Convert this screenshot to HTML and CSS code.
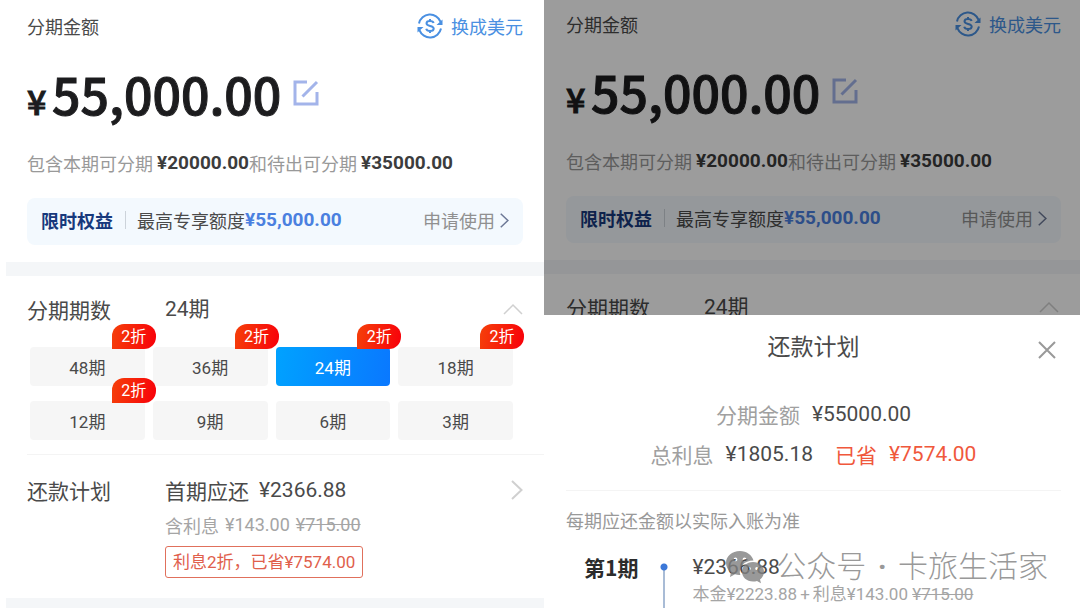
FILE: index.html
```html
<!DOCTYPE html>
<html lang="zh-CN">
  <head>
    <meta charset="UTF-8" />
    <meta name="viewport" content="width=device-width, initial-scale=1.0" />
    <title>账单分期</title>
    <link rel="stylesheet" href="styles.css">
  </head>
  <body>
    <svg class="symbols" xmlns="http://www.w3.org/2000/svg">
      <symbol id="icon-swap" viewBox="0 0 26 26">
        <path d="M2 10.500A11.300 11.300 0 0 1 23.600 8.800M24 15.500A11.300 11.300 0 0 1 2.400 17.200" fill="none" stroke="currentColor" stroke-width="2" />
        <path d="M25.500 6.500v5.500h-6zM.5 19.500V14h6z" fill="currentColor" />
        <path d="M16.600 10C16.200 8.600 15 7.900 13 7.900c-2.200 0-3.500.9-3.500 2.400 0 3.500 7.200 1.800 7.200 5.200 0 1.600-1.400 2.500-3.700 2.500-2.100 0-3.400-.8-3.800-2.300M13 6v2M13 18v2" fill="none" stroke="currentColor" stroke-width="2" />
      </symbol>
      <symbol id="icon-edit" viewBox="0 0 26 26">
        <path d="M14 2H2v22h22V12M9.500 16.500L24 2" fill="none" stroke="currentColor" stroke-width="3" />
      </symbol>
      <symbol id="icon-right" viewBox="0 0 12 20">
        <path d="M1 1l9.500 9L1 19" fill="none" stroke="currentColor" stroke-width="2" />
      </symbol>
      <symbol id="icon-up" viewBox="0 0 20 12">
        <path d="M1 11l9-9 9 9" fill="none" stroke="currentColor" stroke-width="1.500" />
      </symbol>
      <symbol id="icon-close" viewBox="0 0 18 18">
        <path d="M1 1l16 16M17 1L1 17" fill="none" stroke="currentColor" stroke-width="2" />
      </symbol>
    </svg>

    <main class="screens">
      <section class="screen">
        <div class="summary">
          <div class="summary-head">
            <h2>分期金额</h2>
            <a href="#" class="switch-link"><svg class="swap-icon"><use href="#icon-swap" /></svg>换成美元</a>
          </div>
          <div class="amount">
            <span class="currency">¥</span>
            <span class="amount-value">55,000.00</span>
            <button type="button" class="icon-btn edit-btn" aria-label="修改金额"><svg><use href="#icon-edit" /></svg></button>
          </div>
          <p class="note">包含本期可分期<strong class="num">¥20000.00</strong>和待出可分期<strong class="num">¥35000.00</strong></p>
          <div class="banner">
            <strong class="banner-title">限时权益</strong>
            <span class="banner-text">最高专享额度</span>
            <strong class="banner-value num">¥55,000.00</strong>
            <a href="#" class="apply-link">申请使用<svg><use href="#icon-right" /></svg></a>
          </div>
        </div>

        <div class="terms">
          <div class="row">
            <h3>分期期数</h3>
            <span class="term-value">24期</span>
            <button type="button" class="icon-btn up-btn" aria-label="收起"><svg><use href="#icon-up" /></svg></button>
          </div>
          <div class="term-grid">
            <button type="button" class="term">48期<span class="badge">2折</span></button>
            <button type="button" class="term">36期<span class="badge">2折</span></button>
            <button type="button" class="term active">24期<span class="badge">2折</span></button>
            <button type="button" class="term">18期<span class="badge">2折</span></button>
            <button type="button" class="term">12期<span class="badge">2折</span></button>
            <button type="button" class="term">9期</button>
            <button type="button" class="term">6期</button>
            <button type="button" class="term">3期</button>
          </div>
        </div>

        <div class="plan">
          <div class="row">
            <h3>还款计划</h3>
            <span class="plan-first">首期应还 <span class="num">¥2366.88</span></span>
            <button type="button" class="icon-btn more-btn" aria-label="查看还款计划"><svg><use href="#icon-right" /></svg></button>
          </div>
          <div class="plan-detail">
            <p class="interest">含利息 <span class="num">¥143.00</span> <del class="num">¥715.00</del></p>
            <span class="saving">利息2折，已省¥7574.00</span>
          </div>
        </div>
      </section>

      <section class="screen screen-dimmed">
        <div class="summary">
          <div class="summary-head">
            <h2>分期金额</h2>
            <a href="#" class="switch-link"><svg class="swap-icon"><use href="#icon-swap" /></svg>换成美元</a>
          </div>
          <div class="amount">
            <span class="currency">¥</span>
            <span class="amount-value">55,000.00</span>
            <button type="button" class="icon-btn edit-btn" aria-label="修改金额"><svg><use href="#icon-edit" /></svg></button>
          </div>
          <p class="note">包含本期可分期<strong class="num">¥20000.00</strong>和待出可分期<strong class="num">¥35000.00</strong></p>
          <div class="banner">
            <strong class="banner-title">限时权益</strong>
            <span class="banner-text">最高专享额度</span>
            <strong class="banner-value num">¥55,000.00</strong>
            <a href="#" class="apply-link">申请使用<svg><use href="#icon-right" /></svg></a>
          </div>
        </div>

        <div class="terms">
          <div class="row">
            <h3>分期期数</h3>
            <span class="term-value">24期</span>
            <button type="button" class="icon-btn up-btn" aria-label="收起"><svg><use href="#icon-up" /></svg></button>
          </div>
        </div>

        <div class="overlay">
          <div class="sheet" role="dialog" aria-labelledby="sheetTitle">
            <div class="sheet-head">
              <h2 id="sheetTitle">还款计划</h2>
              <button type="button" class="icon-btn close-btn" aria-label="关闭"><svg><use href="#icon-close" /></svg></button>
            </div>
            <div class="totals">
              <p><span class="label">分期金额</span><span class="num">¥55000.00</span></p>
              <p>
                <span class="label">总利息</span><span class="num">¥1805.18</span>
                <span class="saved">已省</span><span class="saved-value num">¥7574.00</span>
              </p>
            </div>
            <p class="tip">每期应还金额以实际入账为准</p>
            <div class="period">
              <strong class="period-name">第1期</strong>
              <span class="timeline"></span>
              <div class="period-info">
                <p class="period-amount num">¥2366.88</p>
                <p class="period-detail">本金¥2223.88<span class="plus">+</span>利息¥143.00 <del>¥715.00</del></p>
              </div>
            </div>
          </div>
        </div>

        <div class="watermark">
          <svg viewBox="0 0 38 33">
            <path fill="currentColor" fill-rule="evenodd" d="M14 0C6 0 0 5.300 0 12c0 3.800 2 7 5 9.200L4 26l5-2.700c1.700.500 3.500.700 5.300.600C12 16.500 18 9.500 27.500 9.500 26 4 20.500 0 14 0zM9.500 6.500a1.900 1.900 0 1 1 0 3.800 1.900 1.900 0 0 1 0-3.800zm9 0a1.900 1.900 0 1 1 0 3.800 1.900 1.900 0 0 1 0-3.800z" />
            <path fill="currentColor" fill-rule="evenodd" d="M27 11c-6.300 0-11 4.300-11 9.800s4.700 9.700 11 9.700c1.400 0 2.800-.2 4-.6l4 2.400-1-3.800c2.500-1.800 4-4.600 4-7.700C38 15.300 33.300 11 27 11zM23.300 16a1.500 1.500 0 1 1 0 3 1.500 1.500 0 0 1 0-3zm7.400 0a1.500 1.500 0 1 1 0 3 1.500 1.500 0 0 1 0-3z" />
          </svg>
          <span>公众号 <span class="dot">·</span> 卡旅生活家</span>
        </div>
      </section>
    </main>
  </body>
</html>
```

FILE: styles.css
```css
* {
  box-sizing: border-box;
}

body {
  margin: 0;
  background-color: #fff;
  color: #4a4a4a;
  font-family: "Noto Sans CJK SC", sans-serif;
  font-size: 18px;
  line-height: 24px;
}

h2,
h3,
p {
  margin: 0;
  font-weight: 400;
}

a {
  color: inherit;
  text-decoration: none;
}

svg {
  display: block;
}

.symbols {
  display: none;
}

.num {
  font-family: Roboto, "Noto Sans CJK SC", sans-serif;
}

.icon-btn {
  padding: 0;
  border: none;
  background: none;
  cursor: pointer;
}

.screens {
  display: grid;
  grid-template-columns: 68fr 67fr;
  height: 100vh;
  overflow: hidden;
}

.screen {
  position: relative;
  padding-left: 6px;
  overflow: hidden;
}

.screen-dimmed {
  padding-left: 0;
}

/* amount summary */
.summary {
  padding: 13px 21px 17px;
  border-bottom: 14px solid #f4f6f8;
}

.screen-dimmed .summary {
  padding: 11px 19px 17px 22px;
}

.summary-head {
  display: flex;
  justify-content: space-between;
  align-items: center;
}

.summary-head h2 {
  font-size: 18px;
}

.switch-link {
  display: flex;
  align-items: center;
  gap: 8px;
  color: #4a90e2;
}

.swap-icon {
  width: 26px;
  height: 26px;
}

.amount {
  display: flex;
  align-items: baseline;
  height: 64px;
  margin-top: 22px;
  color: #1c1c1e;
  font-weight: 500;
  line-height: 64px;
  -webkit-text-stroke: 1px currentColor;
}

.currency {
  width: 25px;
  font-size: 34px;
}

.amount-value {
  font-size: 50px;
}

.edit-btn {
  margin-left: 12px;
  align-self: center;
  color: #a3b4ea;
}

.edit-btn svg {
  width: 26px;
  height: 26px;
}

.note {
  display: flex;
  align-items: center;
  margin-top: 26px;
  color: #999;
  white-space: nowrap;
}

.note strong {
  padding-left: 4px;
  color: #3c3c3c;
  font-size: 19px;
}

.banner {
  display: flex;
  align-items: center;
  margin-top: 23px;
  padding: 10px 14px 13px;
  border-radius: 8px;
  background-color: #f3f9fe;
}

.banner-title {
  padding-right: 12px;
  color: #17397c;
}

.banner-text {
  padding-left: 12px;
  background: linear-gradient(#ccd3da, #ccd3da) left center / 1px 18px no-repeat;
}

.banner-value {
  color: #4a80e0;
  font-size: 19px;
}

.apply-link {
  display: flex;
  align-items: center;
  gap: 5px;
  margin-left: auto;
  color: #909090;
}

.apply-link svg {
  width: 9px;
  height: 15px;
  color: #6c7896;
}

/* rows with a fixed label column */
.row {
  display: flex;
  align-items: center;
  font-size: 21px;
  line-height: 30px;
}

.row h3 {
  width: 138px;
  font-size: 21px;
}

.row .icon-btn {
  margin-left: auto;
  color: #d0d0d0;
}

.terms {
  padding: 18px 21px 14px;
}

.screen-dimmed .terms {
  padding-left: 22px;
}

.term-value {
  font-family: Roboto, "Noto Sans CJK SC", sans-serif;
}

.up-btn svg {
  width: 20px;
  height: 12px;
}

.term-grid {
  display: grid;
  grid-template-columns: repeat(4, 1fr);
  gap: 15px 8px;
  margin: 23px 10px 0 3px;
}

.term {
  position: relative;
  height: 39px;
  padding: 0;
  border: none;
  border-radius: 4px;
  background-color: #f6f6f6;
  color: #4a4a4a;
  font-family: Roboto, "Noto Sans CJK SC", sans-serif;
  font-size: 17px;
  cursor: pointer;
}

.term.active {
  background: linear-gradient(100deg, #00a2ff, #0a78ff);
  color: #fff;
}

.badge {
  position: absolute;
  top: -23px;
  right: -11px;
  width: 44px;
  border-radius: 12px 12px 12px 0;
  background: linear-gradient(100deg, #f5400a, #f8000a);
  color: #fff;
  font-size: 16px;
  line-height: 25px;
}

/* repayment plan */
.plan {
  margin-left: 21px;
  padding: 20px 21px 20px 0;
  border-top: 1px solid #f4f4f4;
}

.plan-first {
  display: flex;
  align-items: center;
  gap: 10px;
}

.more-btn svg {
  width: 12px;
  height: 20px;
}

.plan-detail {
  margin-left: 138px;
}

.interest {
  display: flex;
  align-items: center;
  gap: 6px;
  margin: 8px 0 9px;
  color: #a5a5a5;
}

.saving {
  display: inline-block;
  padding: 3px 7px;
  border: 1px solid #e0705c;
  border-radius: 3px;
  color: #e0604c;
  font-family: Roboto, "Noto Sans CJK SC", sans-serif;
  font-size: 17px;
}

.screen:first-child::after {
  content: "";
  display: block;
  height: 14px;
  background-color: #f4f6f8;
}

/* bottom sheet */
.overlay {
  position: absolute;
  inset: 0;
  display: flex;
  flex-direction: column;
  justify-content: flex-end;
  background-color: rgba(0, 0, 0, 0.39);
}

.sheet {
  padding: 15px 19px 0 22px;
  background-color: #fff;
}

.sheet-head {
  display: grid;
  grid-template-columns: 1fr auto 1fr;
  align-items: center;
}

.sheet-head h2 {
  grid-column: 2;
  font-size: 23px;
  line-height: 30px;
}

.close-btn {
  justify-self: end;
  margin: 10px 5px 0 0;
  color: #999;
}

.close-btn svg {
  width: 18px;
  height: 18px;
}

.totals {
  padding: 34px 0 16px;
  border-bottom: 1px solid #f4f4f4;
  font-size: 21px;
  line-height: 40px;
}

.totals p {
  display: flex;
  justify-content: center;
  align-items: center;
  gap: 12px;
}

.label {
  color: #a0a0a0;
}

.saved,
.saved-value {
  color: #f0583c;
}

.saved {
  margin-left: 10px;
}

.tip {
  margin-top: 17px;
  color: #999;
}

.period {
  display: flex;
  margin-top: 21px;
  padding-left: 18px;
}

.period-name {
  color: #2c2c2c;
  font-size: 21px;
  line-height: 28px;
}

.timeline {
  width: 8px;
  margin: 10px 24px 0 22px;
  background:
    radial-gradient(circle at 4px 4px, #3c78d8 3px, transparent 4px),
    linear-gradient(#a9bcd6, #a9bcd6) 3px 4px / 2px 100% no-repeat;
}

.period-amount {
  font-size: 21px;
  line-height: 28px;
}

.period-detail {
  color: #a5a5a5;
  font-family: Roboto, "Noto Sans CJK SC", sans-serif;
  font-size: 17px;
  line-height: 27px;
  white-space: nowrap;
}

.plus {
  padding: 0 3px;
}

/* account mark lies over the sheet */
.watermark {
  position: absolute;
  right: 32px;
  bottom: 19px;
  display: flex;
  align-items: center;
  gap: 12px;
  color: #808080;
  font-family: Roboto, "Noto Sans CJK SC", sans-serif;
  font-size: 30px;
  font-weight: 300;
  line-height: 44px;
  white-space: nowrap;
  opacity: 0.8;
}

.watermark svg {
  width: 38px;
  height: 33px;
}

.dot {
  padding: 0 4px;
  font-weight: 700;
}
```
